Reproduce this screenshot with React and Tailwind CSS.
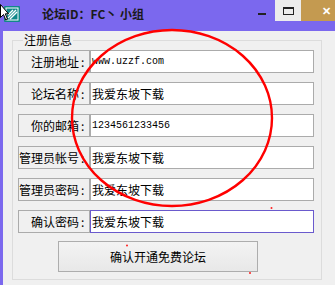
const rows = [
  { label: "注册地址", value: "www.uzzf.com", mono: true },
  { label: "论坛名称", value: "我爱东坡下载" },
  { label: "你的邮箱", value: "1234561233456", mono: true },
  { label: "管理员帐号", value: "我爱东坡下载" },
  { label: "管理员密码", value: "我爱东坡下载" },
  { label: "确认密码", value: "我爱东坡下载", focused: true },
];

const AppIcon = () => (
  <svg width="16" height="16" viewBox="0 0 16 16" className="block">
    <rect x="0" y="0" width="16" height="16" rx="1" fill="#12888a" />
    <rect x="2" y="2" width="12" height="12" fill="none" stroke="#ffffff" strokeWidth="1" />
    <path d="M4 12 L12 4 M6 13 L13 6 M4 9 L9 4" stroke="#ffffff" strokeWidth="1.4" />
  </svg>
);

const Cursor = () => (
  <svg width="9" height="18" viewBox="0 0 9 18" className="absolute left-0 top-[4px]">
    <path d="M0.5 0.5 L0.5 13.5 L3.5 10.5 L5.8 16 L7.5 15.2 L5.3 9.8 L8.5 9.8 Z" fill="#ffffff" stroke="#000000" strokeWidth="1" />
  </svg>
);

export default function App() {
  return (
    <div className="relative h-[285px] w-[335px] overflow-hidden bg-[#f0f0f0] font-['Noto_Sans_CJK_SC',sans-serif] text-black">
      {/* Title bar */}
      <div className="relative flex h-[31px] bg-[#7b68ee]">
        <div className="ml-[4px] mt-[6px]">
          <AppIcon />
        </div>
        <Cursor />
        <div className="ml-[22px] mt-[6px] text-[12px] font-bold leading-[16px] text-[#1a1a1a]">
          论坛ID：FC丶 小组
        </div>
        <div className="ml-auto flex h-[21px]">
          <div className="flex w-[26px] items-center justify-center">
            <div className="mt-[6px] h-[2px] w-[8px] bg-[#222]" />
          </div>
          <div className="flex w-[26px] items-center justify-center bg-[#ececec]">
            <div className="h-[8px] w-[11px] border border-t-2 border-[#222]" />
          </div>
          <div className="flex w-[34px] items-center bg-[#c49a50] pl-[21px] text-[11px] font-bold leading-none text-white">
            ✕
          </div>
        </div>
      </div>

      {/* Body */}
      <div className="flex h-[254px] border-l-[3px] border-[#7b68ee]">
        <fieldset className="ml-[9px] mt-[2px] h-[247px] w-[310px] border border-[#dcdcdc] pb-[8px] pl-[5px] pr-[7px]">
          <legend className="ml-[5px] px-[1px] text-[12px] leading-[14px]">注册信息</legend>
          <div className="mt-[3px] flex flex-col gap-[9px]">
            {rows.map((row) => (
              <div key={row.label} className="flex h-[23px]">
                <div className="flex w-[72px] shrink-0 items-center whitespace-nowrap border border-[#ababab] bg-[#f0f0f0] text-[12px] leading-none">
                  <div className="flex min-w-0 flex-1 justify-end">
                    <span className="shrink-0">{row.label}</span>
                  </div>
                  <span className="w-[10px] shrink-0 pl-[2px]">:</span>
                </div>
                <div
                  className={`flex flex-1 items-center border bg-white pl-[1px] ${
                    row.focused ? "border-[#6a5acd]" : "border-[#ababab]"
                  }`}
                >
                  <span
                    className={
                      row.mono
                        ? "font-['Liberation_Mono',monospace] text-[10px] leading-none"
                        : "text-[12px] leading-none"
                    }
                  >
                    {row.value}
                  </span>
                </div>
              </div>
            ))}
          </div>
          <button
            type="button"
            className="ml-[40px] mt-[8px] h-[31px] w-[200px] border border-[#adadad] bg-gradient-to-b from-[#f3f3f3] to-[#e8e8e8] text-[12px] leading-none"
          >
            确认开通免费论坛
          </button>
        </fieldset>
      </div>

      {/* Red marker ellipse drawn over the form */}
      <svg width="335" height="285" className="pointer-events-none absolute left-0 top-0">
        <ellipse cx="172" cy="118" rx="100" ry="88" fill="none" stroke="#ff0000" strokeWidth="2.4" />
        <circle cx="271.5" cy="208" r="1" fill="#ff2020" />
        <circle cx="127" cy="245.5" r="1" fill="#ff2020" />
        <circle cx="250" cy="273" r="1" fill="#ff2020" />
      </svg>
    </div>
  );
}
